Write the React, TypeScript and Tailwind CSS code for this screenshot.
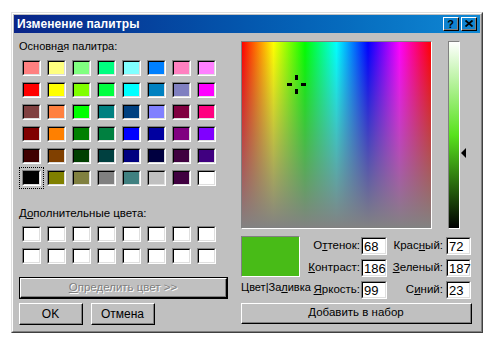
import React from "react";

const MAIN: string[][] = [
  ["#FF8080", "#FFFF80", "#80FF80", "#00FF80", "#80FFFF", "#0080FF", "#FF80C0", "#FF80FF"],
  ["#FF0000", "#FFFF00", "#80FF00", "#00FF40", "#00FFFF", "#0080C0", "#8080C0", "#FF00FF"],
  ["#804040", "#FF8040", "#00FF00", "#008080", "#004080", "#8080FF", "#800040", "#FF0080"],
  ["#800000", "#FF8000", "#008000", "#008040", "#0000FF", "#0000A0", "#800080", "#8000FF"],
  ["#400000", "#804000", "#004000", "#004040", "#000080", "#000040", "#400040", "#400080"],
  ["#000000", "#808000", "#808040", "#808080", "#408080", "#C0C0C0", "#400040", "#FFFFFF"],
];

function Swatch({ c, focus }: { c: string; focus?: boolean }) {
  return (
    <div className="relative w-[19px] h-[16px]">
      {focus && (
        <div className="absolute left-[-3px] top-[-3px] w-[25px] h-[22px] border border-dotted border-black" />
      )}
      <div className="w-full h-full border-t border-l border-t-[#808080] border-l-[#808080] border-b border-r border-b-white border-r-white">
        <div
          className="w-full h-full border-t border-l border-t-black border-l-black border-b border-r border-b-[#dfdfdf] border-r-[#dfdfdf]"
          style={{ backgroundColor: c }}
        />
      </div>
    </div>
  );
}

function Raised({
  className,
  children,
  frame,
}: {
  className: string;
  children: React.ReactNode;
  frame?: boolean;
}) {
  const inner = (
    <div className="w-full h-full border-t border-l border-t-white border-l-white border-b border-r border-b-black border-r-black">
      <div className="w-full h-full border-b border-r border-b-[#808080] border-r-[#808080] flex items-center justify-center">
        {children}
      </div>
    </div>
  );
  return (
    <div className={`${className} ${frame ? "border border-black" : ""}`}>{inner}</div>
  );
}

function Field({ v }: { v: string }) {
  return (
    <div className="h-[18px] border-t border-l border-t-[#808080] border-l-[#808080] border-b border-r border-b-white border-r-white">
      <div className="w-full h-full bg-white border-t border-l border-t-black border-l-black border-b border-r border-b-[#dfdfdf] border-r-[#dfdfdf] pl-[1px] text-[13px] leading-[15px] text-black">
        {v}
      </div>
    </div>
  );
}

export default function App() {
  return (
    <div className="w-[494px] h-[343px] bg-white pt-[12px] pl-[11px] font-['Liberation_Sans',Arial,sans-serif] text-black">
      <div className="w-[472px] h-[321px] bg-[#c0c0c0] border border-t-[#dfdfdf] border-l-[#dfdfdf] border-b-[#404040] border-r-[#404040]">
        <div className="w-full h-full border border-t-white border-l-white border-b-[#808080] border-r-[#808080] p-[1px]">
          {/* Title bar */}
          <div className="h-[18px] bg-linear-to-r from-[#0a2488] to-[#1088d4] flex items-center pl-[3px] pr-[3px]">
            <span className="text-white font-bold text-[12px] leading-[18px] tracking-[0.1px]">
              Изменение палитры
            </span>
            <div className="ml-auto flex gap-[2px]">
              <Raised className="w-[16px] h-[14px]">
                <span className="text-[11px] font-bold leading-[10px]">?</span>
              </Raised>
              <Raised className="w-[16px] h-[14px]">
                <svg width="8" height="7" viewBox="0 0 8 7">
                  <path d="M0.5 0.5 L7.5 6.5 M7.5 0.5 L0.5 6.5" stroke="black" strokeWidth="1.8" />
                </svg>
              </Raised>
            </div>
          </div>

          {/* Content */}
          <div className="flex pl-[5px] pt-[7px] gap-[13px]">
            {/* Left column */}
            <div className="w-[209px] flex flex-col">
              <div className="h-[13px] leading-[13px] text-[11px]">
                Основн<u>а</u>я палитра:
              </div>
              <div className="mt-[7px] ml-[3px] grid grid-cols-[repeat(8,19px)] gap-x-[6px] gap-y-[6px]">
                {MAIN.flatMap((row, r) =>
                  row.map((c, i) => <Swatch key={`${r}-${i}`} c={c} focus={r === 5 && i === 0} />)
                )}
              </div>
              <div className="mt-[21px] h-[13px] leading-[13px] text-[11.5px]">
                Д<u>о</u>полнительные цвета:
              </div>
              <div className="mt-[6px] ml-[3px] grid grid-cols-[repeat(8,19px)] gap-x-[6px] gap-y-[6px]">
                {Array.from({ length: 16 }).map((_, i) => (
                  <Swatch key={i} c="#FFFFFF" />
                ))}
              </div>
              <Raised className="mt-[13px] w-[209px] h-[22px]" frame>
                <span className="text-[11.5px] text-[#808080] [text-shadow:1px_1px_0_#ffffff]">
                  <u>О</u>пределить цвет &gt;&gt;
                </span>
              </Raised>
              <div className="mt-[4px] flex gap-[8px]">
                <Raised className="w-[64px] h-[22px]">
                  <span className="text-[12px]">OK</span>
                </Raised>
                <Raised className="w-[64px] h-[22px]">
                  <span className="text-[12px]">Отмена</span>
                </Raised>
              </div>
            </div>

            {/* Right column */}
            <div className="w-[231px] flex flex-col">
              <div className="mt-[1px] flex items-start">
                <div className="relative w-[191px] h-[188px] border border-t-[#808080] border-l-[#808080] border-b-white border-r-white">
                  <div className="w-full h-full bg-[linear-gradient(to_bottom,rgba(128,128,128,0),#828282),linear-gradient(to_right,#ff0000,#ffff00,#00ff00,#00ffff,#0000ff,#ff00ff,#ff0000)]" />
                  {/* crosshair */}
                  <div className="absolute left-[53px] top-[33px] w-[3px] h-[5px] bg-black" />
                  <div className="absolute left-[53px] top-[47px] w-[3px] h-[5px] bg-black" />
                  <div className="absolute left-[45px] top-[41px] w-[5px] h-[3px] bg-black" />
                  <div className="absolute left-[59px] top-[41px] w-[5px] h-[3px] bg-black" />
                </div>
                <div className="ml-[16px] w-[12px] h-[188px] border border-t-[#808080] border-l-[#808080] border-b-white border-r-white">
                  <div className="w-full h-full bg-[linear-gradient(to_bottom,#ffffff,#58e21d,#000000)]" />
                </div>
                <div className="ml-[1px] mt-[107px]">
                  <svg width="6" height="10" viewBox="0 0 6 10">
                    <path d="M0 5 L5 0 L5 10 Z" fill="black" />
                  </svg>
                </div>
              </div>

              <div className="mt-[7px] flex items-start">
                <div className="w-[59px] flex flex-col">
                  <div className="w-[59px] h-[41px] bg-[#48bb17] border border-t-[#808080] border-l-[#808080] border-b-white border-r-white" />
                  <div className="mt-[4px] h-[13px] leading-[13px] text-[11px] whitespace-nowrap">
                    Цвет|За<u>л</u>ивка
                  </div>
                </div>
                <div className="mt-[1px] grid grid-cols-[61px_26px_59px_25px] gap-y-[4px] items-center">
                  <div className="text-right text-[11.5px] pr-[1px]">О<u>т</u>тенок:</div>
                  <Field v="68" />
                  <div className="text-right text-[11.5px] pr-[3px]">Крас<u>н</u>ый:</div>
                  <Field v="72" />
                  <div className="text-right text-[11.5px] pr-[1px]"><u>К</u>онтраст:</div>
                  <Field v="186" />
                  <div className="text-right text-[11.5px] pr-[3px]"><u>З</u>еленый:</div>
                  <Field v="187" />
                  <div className="text-right text-[11.5px] pr-[1px]"><u>Я</u>ркость:</div>
                  <Field v="99" />
                  <div className="text-right text-[11.5px] pr-[3px]">С<u>и</u>ний:</div>
                  <Field v="23" />
                </div>
              </div>

              <Raised className="mt-[4px] w-[231px] h-[21px]">
                <span className="text-[11.5px]">
                  <u>Д</u>обавить в набор
                </span>
              </Raised>
            </div>
          </div>
        </div>
      </div>
    </div>
  );
}
